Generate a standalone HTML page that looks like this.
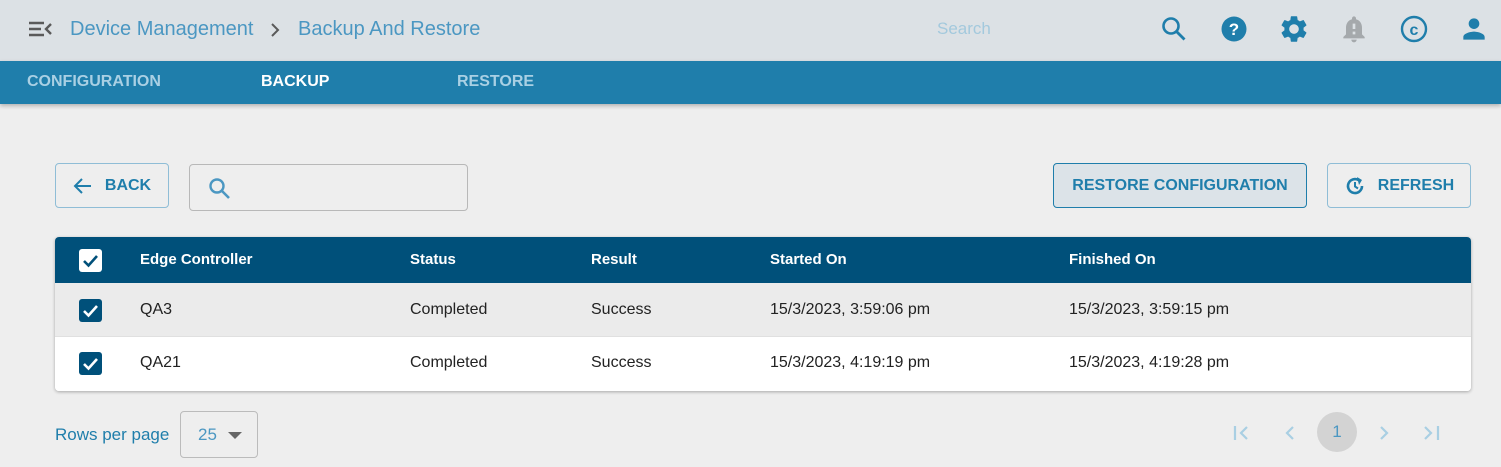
<!DOCTYPE html>
<html><head><style>
*{box-sizing:border-box;margin:0;padding:0}
body{width:1501px;height:467px;overflow:hidden;background:#eeeeee;font-family:"Liberation Sans",sans-serif;position:relative}
.a{position:absolute}
.hdr{left:0;top:0;width:1501px;height:61px;background:#dce1e5}
.nav{left:0;top:61px;width:1501px;height:43px;background:#1f7eab;box-shadow:0 2px 4px rgba(0,0,0,.25)}
.nav span{position:absolute;top:12px;font-size:16px;font-weight:bold;color:#a9d0e4}
.btn{border:1px solid #8fbdd6;border-radius:4px;color:#1f7eab;font-size:16px;font-weight:bold;display:flex;align-items:center;justify-content:center}
.tbl{left:55px;top:237px;width:1416px;height:154px;border-radius:4px;overflow:hidden;box-shadow:0 1px 3px rgba(0,0,0,.3);background:#fff}
.th{position:absolute;top:0;left:0;width:100%;height:46px;background:#00507a;color:#fff;font-weight:bold;font-size:15px}
.r{position:absolute;left:0;width:100%;font-size:16px;color:#222}
.c{position:absolute}
.cb{position:absolute;left:24px;width:23px;height:23px;border-radius:3px}
</style></head><body>
<div class="a hdr"></div>
<svg class="a" style="left:28px;top:20px" width="26" height="18" viewBox="0 0 26 18"><path d="M1 3h15M1 9h12M1 15h15M23 4l-5 5 5 5" stroke="#5a5a5a" stroke-width="2.4" fill="none"/></svg>
<div class="a" style="left:70px;top:18px;font-size:20px;color:#4b97c2">Device Management</div>
<svg class="a" style="left:270px;top:23px" width="10" height="14"><path d="M2 1l6 6-6 6" stroke="#5a5a5a" stroke-width="2" fill="none"/></svg>
<div class="a" style="left:298px;top:18px;font-size:20px;color:#4b97c2">Backup And Restore</div>
<div class="a" style="left:937px;top:19px;font-size:17px;color:#a3c9dd">Search</div>
<svg class="a" style="left:1161px;top:16px" width="26" height="26" viewBox="0 0 26 26"><circle cx="10" cy="10" r="7.5" stroke="#1f7eab" stroke-width="2.6" fill="none"/><path d="M15.5 15.5l8 8" stroke="#1f7eab" stroke-width="2.8"/></svg>
<svg class="a" style="left:1221px;top:16px" width="26" height="26"><circle cx="13" cy="13" r="12.5" fill="#1f7eab"/><text x="13" y="19" text-anchor="middle" font-family="Liberation Sans" font-weight="bold" font-size="17" fill="#fff">?</text></svg>
<svg class="a" style="left:1278px;top:13px" width="32" height="32" viewBox="0 0 24 24"><path fill="#1f7eab" d="M19.14 12.94c.04-.3.06-.61.06-.94 0-.32-.02-.64-.07-.94l2.030-1.58a.49.49 0 0 0 .12-.61l-1.92-3.32a.488.488 0 0 0-.59-.22l-2.39.96c-.5-.38-1.030-.7-1.62-.94l-.36-2.54a.484.484 0 0 0-.48-.41h-3.84c-.24 0-.43.17-.47.41l-.36 2.54c-.59.24-1.13.57-1.62.94l-2.39-.96c-.22-.08-.47 0-.59.22L2.74 8.87c-.12.21-.08.47.12.61l2.03 1.58c-.05.3-.09.63-.09.94s.02.64.07.94l-2.03 1.58a.49.49 0 0 0-.12.61l1.92 3.32c.12.22.37.29.59.22l2.39-.96c.5.38 1.03.7 1.62.94l.36 2.54c.05.24.24.41.48.41h3.84c.24 0 .44-.17.47-.41l.36-2.54c.59-.24 1.13-.56 1.62-.94l2.39.96c.22.08.47 0 .59-.22l1.92-3.32c.12-.22.07-.47-.12-.61l-2.01-1.58zM12 15.6c-1.98 0-3.6-1.62-3.6-3.6s1.62-3.6 3.6-3.6 3.6 1.62 3.6 3.6-1.62 3.6-3.6 3.6z"/></svg>
<svg class="a" style="left:1338px;top:13px" width="32" height="32" viewBox="0 0 24 24"><path fill="#a5a9ac" d="M12 22c1.1 0 2-.9 2-2h-4c0 1.1.9 2 2 2zm6-6v-5c0-3.07-1.63-5.64-4.5-6.32V4c0-.83-.67-1.5-1.5-1.5s-1.5.67-1.5 1.5v.68C7.64 5.36 6 7.920 6 11v5l-2 2v1h16v-1l-2-2zm-5 0h-2v-2h2v2zm0-4h-2V8h2v4z"/></svg>
<svg class="a" style="left:1400px;top:15px" width="28" height="28"><circle cx="14" cy="14" r="12" stroke="#1f7eab" stroke-width="2.4" fill="none"/><text x="14" y="20" text-anchor="middle" font-family="Liberation Sans" font-weight="bold" font-size="16" fill="#1f7eab">c</text></svg>
<svg class="a" style="left:1458px;top:13px" width="32" height="32" viewBox="0 0 24 24"><path fill="#1f7eab" d="M12 12c2.21 0 4-1.79 4-4s-1.79-4-4-4-4 1.79-4 4 1.79 4 4 4zm0 2c-2.67 0-8 1.34-8 4v2h16v-2c0-2.66-5.33-4-8-4z"/></svg>
<div class="a nav"><span style="left:27px">CONFIGURATION</span><span style="left:261px;color:#fff">BACKUP</span><span style="left:457px">RESTORE</span></div>

<div class="a btn" style="left:55px;top:163px;width:114px;height:45px"><svg width="20" height="18" style="margin-right:12px"><path d="M18 9H3M9 2L2 9l7 7" stroke="#1f7eab" stroke-width="2" fill="none"/></svg>BACK</div>
<div class="a" style="left:189px;top:164px;width:279px;height:47px;border:1px solid #b8b8b8;border-radius:4px"><svg class="a" style="left:18px;top:12px" width="24" height="24"><circle cx="9" cy="9" r="6.5" stroke="#4b97c2" stroke-width="2.4" fill="none"/><path d="M14 14l7 7" stroke="#4b97c2" stroke-width="2.6"/></svg></div>
<div class="a btn" style="left:1053px;top:163px;width:254px;height:45px;background:#dce3e8;border-color:#1f7eab">RESTORE CONFIGURATION</div>
<div class="a btn" style="left:1327px;top:163px;width:144px;height:45px"><svg width="22" height="22" viewBox="0 0 22 22" style="margin-right:12px"><path d="M18 11a7 7 0 1 1-3-5.7" stroke="#1f7eab" stroke-width="2.6" fill="none"/><path d="M13 2l5 3-3 5z" fill="#1f7eab"/><path d="M11 7v4.5l3 2" stroke="#1f7eab" stroke-width="2" fill="none"/></svg>REFRESH</div>

<div class="a tbl">
<div class="th"><div class="cb" style="top:12px;background:#fff"><svg width="23" height="23"><path d="M5 12l4.5 4.5L18 7" stroke="#00507a" stroke-width="2.6" fill="none"/></svg></div>
<span class="c" style="left:85px;top:14px">Edge Controller</span><span class="c" style="left:355px;top:14px">Status</span><span class="c" style="left:536px;top:14px">Result</span><span class="c" style="left:715px;top:14px">Started On</span><span class="c" style="left:1014px;top:14px">Finished On</span></div>
<div class="r" style="top:46px;height:54px;background:#ebebeb;border-bottom:1px solid #e0e0e0"><div class="cb" style="top:16px;background:#00507a"><svg width="23" height="23"><path d="M5 12l4.5 4.5L18 7" stroke="#fff" stroke-width="2.6" fill="none"/></svg></div>
<span class="c" style="left:85px;top:18px">QA3</span><span class="c" style="left:355px;top:18px">Completed</span><span class="c" style="left:536px;top:18px">Success</span><span class="c" style="left:715px;top:18px">15/3/2023, 3:59:06 pm</span><span class="c" style="left:1014px;top:18px">15/3/2023, 3:59:15 pm</span></div>
<div class="r" style="top:100px;height:54px;background:#fff"><div class="cb" style="top:15px;background:#00507a"><svg width="23" height="23"><path d="M5 12l4.5 4.5L18 7" stroke="#fff" stroke-width="2.6" fill="none"/></svg></div>
<span class="c" style="left:85px;top:17px">QA21</span><span class="c" style="left:355px;top:17px">Completed</span><span class="c" style="left:536px;top:17px">Success</span><span class="c" style="left:715px;top:17px">15/3/2023, 4:19:19 pm</span><span class="c" style="left:1014px;top:17px">15/3/2023, 4:19:28 pm</span></div>
</div>

<div class="a" style="left:55px;top:425px;font-size:17px;color:#1f7eab">Rows per page</div>
<div class="a" style="left:180px;top:411px;width:78px;height:47px;border:1px solid #bbb;border-radius:4px"><span class="a" style="left:17px;top:13px;font-size:17px;color:#4b97c2">25</span><svg class="a" style="left:47px;top:20px" width="14" height="8"><path d="M0 0h14L7 7z" fill="#666"/></svg></div>
<svg class="a" style="left:1232px;top:424px" width="20" height="18"><path d="M3 2v14M15 3L9 9l6 6" stroke="#a9cfe3" stroke-width="2.2" fill="none"/></svg>
<svg class="a" style="left:1282px;top:424px" width="16" height="18"><path d="M11 3L5 9l6 6" stroke="#a9cfe3" stroke-width="2.2" fill="none"/></svg>
<div class="a" style="left:1317px;top:412px;width:40px;height:40px;border-radius:50%;background:#d3d3d3;color:#4b97c2;font-size:17px;text-align:center;line-height:40px">1</div>
<svg class="a" style="left:1376px;top:424px" width="16" height="18"><path d="M5 3l6 6-6 6" stroke="#a9cfe3" stroke-width="2.2" fill="none"/></svg>
<svg class="a" style="left:1422px;top:424px" width="20" height="18"><path d="M3 3l6 6-6 6M16 2v14" stroke="#a9cfe3" stroke-width="2.2" fill="none"/></svg>
</body></html>
